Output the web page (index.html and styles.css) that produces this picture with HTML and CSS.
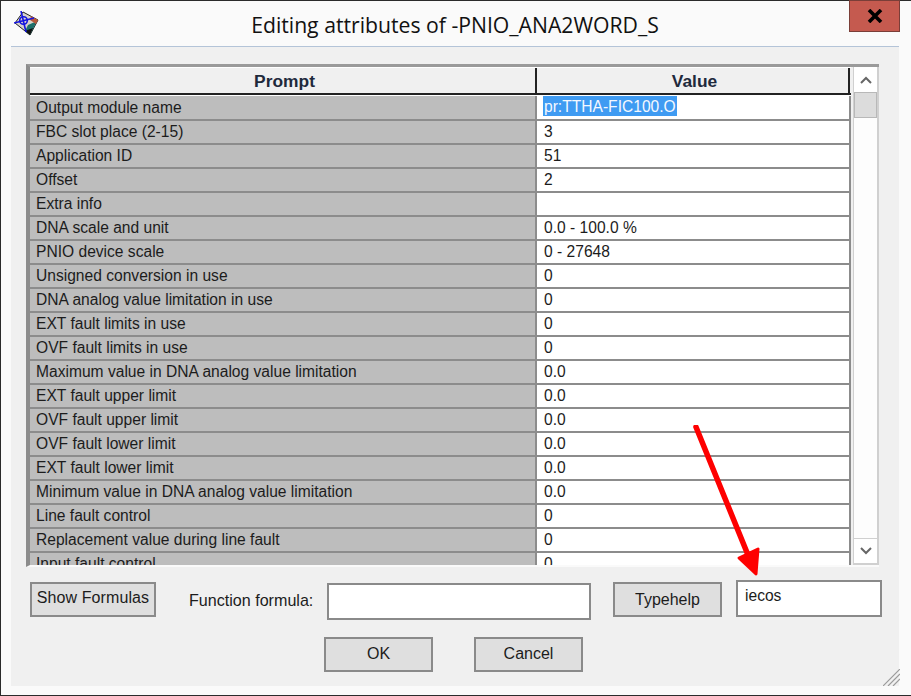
FILE: index.html
```html
<!DOCTYPE html>
<html lang="en">
<head>
  <meta charset="UTF-8" />
  <meta name="viewport" content="width=device-width, initial-scale=1.0"/>
  <title>Editing attributes</title>
  <link rel="stylesheet" href="styles.css">
</head>
<body>

<div class="window">
  <div class="titlebar">
    <svg class="app-icon" width="25" height="25" viewBox="0 0 25 25">
      <path d="M9 1 L24 9 L16 24 L1 12 Z" fill="#d8d4cc" stroke="#222" stroke-width="1"/>
      <path d="M14 14 L23 10 L16 24 L11 20 Z" fill="#1d6f6a"/>
      <path d="M17 5 L24 9 L22 13 L16 9 Z" fill="#b8573a"/>
      <path d="M11 20 L16 24 L19 17 Z" fill="#111"/>
      <path d="M7 0 L12 21 M0 12 L20 7" stroke="#1414e0" stroke-width="1.6" fill="none"/>
      <circle cx="9.5" cy="9.5" r="3.8" fill="none" stroke="#1414e0" stroke-width="1.6"/>
    </svg>
    <div class="title">Editing attributes of -PNIO_ANA2WORD_S</div>
    <div class="close">
      <svg width="16" height="14" viewBox="0 0 16 14"><path d="M2 1 L14 13 M14 1 L2 13" stroke="#000" stroke-width="3.6"/></svg>
    </div>
  </div>

  <div class="client">
    <div class="grid-wrap">
      <div class="grid">
        <div class="grid-head">
          <div class="head-cell prompt-head">Prompt</div>
          <div class="head-cell value-head">Value</div>
        </div>
        <div class="row row-first"><div class="prompt">Output module name</div><div class="value"><span class="selected">pr:TTHA-FIC100.O</span></div></div>
        <div class="row"><div class="prompt">FBC slot place (2-15)</div><div class="value">3</div></div>
        <div class="row"><div class="prompt">Application ID</div><div class="value">51</div></div>
        <div class="row"><div class="prompt">Offset</div><div class="value">2</div></div>
        <div class="row"><div class="prompt">Extra info</div><div class="value"></div></div>
        <div class="row"><div class="prompt">DNA scale and unit</div><div class="value">0.0 - 100.0 %</div></div>
        <div class="row"><div class="prompt">PNIO device scale</div><div class="value">0 - 27648</div></div>
        <div class="row"><div class="prompt">Unsigned conversion in use</div><div class="value">0</div></div>
        <div class="row"><div class="prompt">DNA analog value limitation in use</div><div class="value">0</div></div>
        <div class="row"><div class="prompt">EXT fault limits in use</div><div class="value">0</div></div>
        <div class="row"><div class="prompt">OVF fault limits in use</div><div class="value">0</div></div>
        <div class="row"><div class="prompt">Maximum value in DNA analog value limitation</div><div class="value">0.0</div></div>
        <div class="row"><div class="prompt">EXT fault upper limit</div><div class="value">0.0</div></div>
        <div class="row"><div class="prompt">OVF fault upper limit</div><div class="value">0.0</div></div>
        <div class="row"><div class="prompt">OVF fault lower limit</div><div class="value">0.0</div></div>
        <div class="row"><div class="prompt">EXT fault lower limit</div><div class="value">0.0</div></div>
        <div class="row"><div class="prompt">Minimum value in DNA analog value limitation</div><div class="value">0.0</div></div>
        <div class="row"><div class="prompt">Line fault control</div><div class="value">0</div></div>
        <div class="row"><div class="prompt">Replacement value during line fault</div><div class="value">0</div></div>
        <div class="row"><div class="prompt">Input fault control</div><div class="value">0</div></div>
      </div>
      <div class="scrollbar">
        <div class="scroll-btn">
          <svg width="12" height="8" viewBox="0 0 12 8"><path d="M1 7 L6 2 L11 7" fill="none" stroke="#666" stroke-width="2"/></svg>
        </div>
        <div class="scroll-thumb"></div>
        <div class="scroll-track"></div>
        <div class="scroll-btn scroll-btn-down">
          <svg width="12" height="8" viewBox="0 0 12 8"><path d="M1 1 L6 6 L11 1" fill="none" stroke="#666" stroke-width="2"/></svg>
        </div>
      </div>
    </div>

    <div class="formula-row">
      <button class="btn btn-formulas">Show Formulas</button>
      <label class="formula-label">Function formula:</label>
      <div class="field field-formula"></div>
      <button class="btn btn-typehelp">Typehelp</button>
      <div class="field field-help">iecos</div>
    </div>

    <div class="actions">
      <button class="btn btn-action">OK</button>
      <button class="btn btn-action">Cancel</button>
    </div>

    <svg class="grip" width="17" height="17" viewBox="0 0 17 17">
      <path d="M0 17 L17 0 M5 17 L17 5 M10 17 L17 10" stroke="#9a9a9a" stroke-width="1.2"/>
    </svg>
  </div>

  <svg class="arrow" width="80" height="160" viewBox="0 0 80 160">
    <path d="M4 2 L56 130" stroke="#fe0000" stroke-width="5.5" stroke-linecap="round"/>
    <path d="M47 133 L66 124 L64 149 Z" fill="#fe0000" stroke="#fe0000" stroke-width="3" stroke-linejoin="round"/>
  </svg>
</div>

</body>
</html>
```

FILE: styles.css
```css
html, body {
  height: 100%;
  margin: 0;
  padding: 0;
}
body {
  background: #fff;
  font-family: "Liberation Sans", Arial, sans-serif;
  font-size: 15.6px;
  color: #1c1c1c;
  overflow: hidden;
}
.window {
  position: relative;
  box-sizing: border-box;
  width: 911px;
  height: 696px;
  border-top: 1px solid #2b2b2b;
  border-left: 1px solid #2b2b2b;
  border-bottom: 1px solid #2b2b2b;
  background: #fafafa;
  padding: 0 12px 9px 10px;
  display: flex;
  flex-direction: column;
}
.titlebar {
  height: 45px;
  display: grid;
  grid-template-columns: 1fr auto 1fr;
  align-items: start;
  flex-shrink: 0;
}
.app-icon {
  margin: 10px 0 0 3px;
}
.title {
  font-family: "Open Sans", sans-serif;
  font-size: 21.2px;
  line-height: 28px;
  margin-top: 10px;
  color: #111;
}
.close {
  justify-self: end;
  width: 51px;
  height: 32px;
  box-sizing: border-box;
  margin-top: -1px;
  margin-right: -1px;
  background: #c55a4f;
  border: 1px solid #7a3e38;
  display: flex;
  align-items: center;
  justify-content: center;
}
.client {
  position: relative;
  flex: 1;
  background: #f0f0f0;
  border-top: 1px solid #b4c4d8;
  padding: 17px 0 0 15px;
}
.grid-wrap {
  display: flex;
  width: 853px;
  height: 503px;
  box-sizing: border-box;
  border-top: 3px solid #9a9a9a;
  border-left: 4px solid #8c8c8c;
  border-bottom: 2px solid #fafafa;
  overflow: hidden;
}
.grid {
  width: 821px;
  flex-shrink: 0;
  background: #fff;
  overflow: hidden;
}
.grid-head {
  display: flex;
  height: 28px;
  box-sizing: border-box;
  background: #f0f0f0;
  border-top: 1px solid #fff;
  border-bottom: 2px solid #222;
  margin-bottom: 1px;
}
.head-cell {
  font-weight: bold;
  text-align: center;
  line-height: 26px;
  font-size: 17.4px;
  color: #1f2a3c;
}
.prompt-head {
  width: 507px;
  box-sizing: border-box;
  border-right: 2px solid #222;
  padding-left: 4px;
}
.value-head {
  width: 313px;
  box-sizing: border-box;
  border-right: 2px solid #222;
  padding-left: 4px;
}
.row {
  display: flex;
  height: 24px;
  box-sizing: border-box;
  border-bottom: 2px solid #8c8c8c;
  line-height: 22px;
}
.row-first {
  height: 25px;
  line-height: 24px;
}
.prompt {
  width: 507px;
  box-sizing: border-box;
  background: #bdbdbd;
  padding-left: 6px;
  border-right: 2px solid #8c8c8c;
}
.value {
  width: 314px;
  box-sizing: border-box;
  padding-left: 7px;
  background: #fff;
  border-right: 2px solid #8c8c8c;
}
.selected {
  background: #3f9bf2;
  color: #f4f8ff;
  display: inline-block;
  height: 20px;
  line-height: 22px;
  margin-left: -1px;
  padding: 0 1px;
  vertical-align: top;
}
.scrollbar {
  width: 26px;
  box-sizing: border-box;
  margin-left: 2px;
  background: #fff;
  display: flex;
  flex-direction: column;
  border-left: 1px solid #d0d0d0;
  border-right: 2px solid #d0d0d0;
  border-bottom: 2px solid #d0d0d0;
}
.scroll-btn {
  height: 25px;
  flex-shrink: 0;
  display: flex;
  align-items: center;
  justify-content: center;
  box-sizing: border-box;
}
.scroll-btn-down {
  border-top: 1px solid #d0d0d0;
}
.scroll-thumb {
  height: 26px;
  flex-shrink: 0;
  background: #dcdcdc;
  border: 1px solid #b8b8b8;
  box-sizing: border-box;
}
.scroll-track {
  flex: 1;
  background: #fdfdfd;
}
.formula-row {
  display: flex;
  align-items: flex-start;
  margin-top: 13px;
  margin-left: 4px;
}
.btn {
  box-sizing: border-box;
  height: 35px;
  background: #dfdfdf;
  border: 2px solid #8a8a8a;
  font-family: "Liberation Sans", Arial, sans-serif;
  font-size: 16px;
  color: #1c1c1c;
  padding: 0 0 1px;
}
.btn-formulas {
  width: 126px;
  margin-top: 2px;
  padding-bottom: 3px;
  letter-spacing: 0.1px;
}
.formula-label {
  width: 125px;
  flex-shrink: 0;
  margin-left: 33px;
  font-size: 16.1px;
  line-height: 40px;
  white-space: nowrap;
}
.field {
  box-sizing: border-box;
  height: 37px;
  background: #fff;
  border: 2px solid #8a8a8a;
}
.field-formula {
  width: 264px;
  margin-left: 13px;
  margin-top: 3px;
}
.btn-typehelp {
  width: 109px;
  margin-left: 22px;
  margin-top: 2px;
  padding-bottom: 0;
}
.field-help {
  width: 146px;
  margin-left: 14px;
  padding-left: 7px;
  line-height: 28px;
}
.actions {
  display: flex;
  gap: 41px;
  margin-top: 17px;
  margin-left: 298px;
}
.btn-action {
  width: 109px;
}
.grip {
  position: absolute;
  right: -1px;
  bottom: 0;
}
.arrow {
  position: absolute;
  left: 691px;
  top: 424px;
}
```
